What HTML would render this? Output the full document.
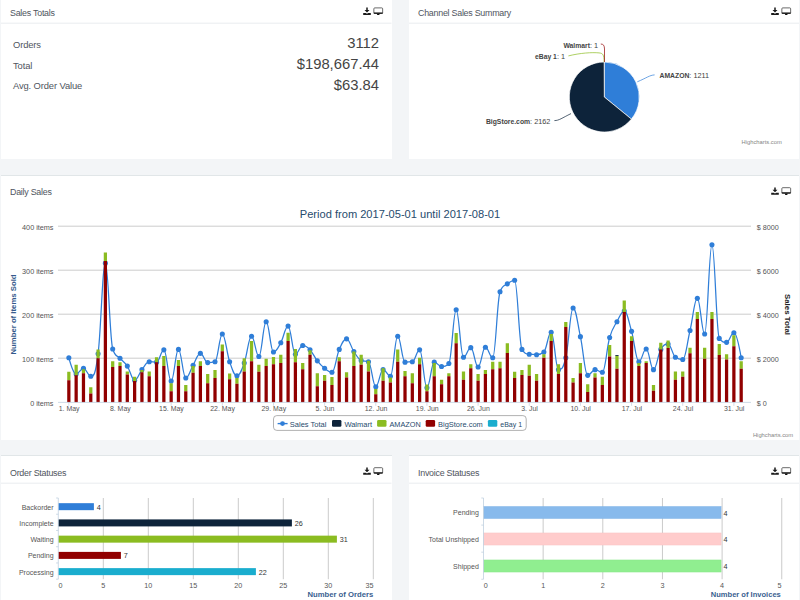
<!DOCTYPE html>
<html><head><meta charset="utf-8"><title>Dashboard</title>
<style>
html,body{margin:0;padding:0}
body{width:800px;height:600px;overflow:hidden;background:#f3f5f7;font-family:"Liberation Sans",sans-serif;position:relative;color:#555}
.panel{position:absolute;background:#fff;border-top:1.5px solid #e1e6e8;box-sizing:border-box}
.hd{position:absolute;left:0;right:0;top:0;font-size:8.9px;letter-spacing:-0.25px;line-height:11px;color:#4f5560;white-space:nowrap}
.hd span{position:absolute;left:9px}
.row{position:absolute;left:12px;right:12.5px;height:20px;font-size:9.4px;letter-spacing:-0.12px;color:#4f5560}
.row b{position:absolute;right:0;bottom:0;font-weight:normal;letter-spacing:0;font-size:14.8px;line-height:15px;color:#444}
.row i{position:absolute;left:0;bottom:0;font-style:normal;line-height:11px}
svg.c{position:absolute;left:0;top:0;pointer-events:none}
</style></head><body>
<div class="panel" style="left:1px;top:-1px;width:390.5px;height:160px"><div class="hd"><span style="top:8.1px">Sales Totals</span></div>
<div class="row" style="top:31.3px"><i style="bottom:1.2px">Orders</i><b>3112</b></div>
<div class="row" style="top:51.8px"><i style="bottom:1.1px">Total</i><b>$198,667.44</b></div>
<div class="row" style="top:72.6px"><i style="bottom:1.5px">Avg. Order Value</i><b>$63.84</b></div>
</div>
<div class="panel" style="left:409px;top:-1px;width:390px;height:160px"><div class="hd"><span style="top:8.1px">Channel Sales Summary</span></div></div>
<div class="panel" style="left:1px;top:175px;width:798px;height:265px"><div class="hd"><span style="top:11.2px">Daily Sales</span></div></div>
<div class="panel" style="left:1px;top:455px;width:390.5px;height:160px"><div class="hd"><span style="top:11.5px">Order Statuses</span></div></div>
<div class="panel" style="left:409px;top:455px;width:390px;height:160px"><div class="hd"><span style="top:11.5px">Invoice Statuses</span></div></div>
<svg class="c" width="800" height="600" viewBox="0 0 800 600">
<path d="M1 23.2H391.5M409 23.2H799M1 483.2H391.5M409 483.2H799" stroke="#e9ecef" stroke-width="1"/>
<g transform="translate(0 0.20)"><g transform="translate(363.20 7.4)" fill="#1a1a1a"><path d="M3.05 0h1.5v2.45h1.75L3.8 4.9 1.3 2.45h1.75z"/><path d="M0 5.3h2.5l1.3 0.8 1.3-0.8h2.5v2H0z"/></g><g transform="translate(373.45 7.3)"><rect x="0.4" y="0.4" width="8.8" height="5.5" rx="0.9" fill="none" stroke="#3a3a3a" stroke-width="0.75"/><rect x="0.3" y="5.0" width="9" height="1.25" fill="#111"/><path d="M3.3 6.2h3l-0.5 1.4h-2z" fill="#111"/></g></g><g transform="translate(0 0.20)"><g transform="translate(771.20 7.4)" fill="#1a1a1a"><path d="M3.05 0h1.5v2.45h1.75L3.8 4.9 1.3 2.45h1.75z"/><path d="M0 5.3h2.5l1.3 0.8 1.3-0.8h2.5v2H0z"/></g><g transform="translate(781.45 7.3)"><rect x="0.4" y="0.4" width="8.8" height="5.5" rx="0.9" fill="none" stroke="#3a3a3a" stroke-width="0.75"/><rect x="0.3" y="5.0" width="9" height="1.25" fill="#111"/><path d="M3.3 6.2h3l-0.5 1.4h-2z" fill="#111"/></g></g><g transform="translate(0 180.00)"><g transform="translate(771.20 7.4)" fill="#1a1a1a"><path d="M3.05 0h1.5v2.45h1.75L3.8 4.9 1.3 2.45h1.75z"/><path d="M0 5.3h2.5l1.3 0.8 1.3-0.8h2.5v2H0z"/></g><g transform="translate(781.45 7.3)"><rect x="0.4" y="0.4" width="8.8" height="5.5" rx="0.9" fill="none" stroke="#3a3a3a" stroke-width="0.75"/><rect x="0.3" y="5.0" width="9" height="1.25" fill="#111"/><path d="M3.3 6.2h3l-0.5 1.4h-2z" fill="#111"/></g></g><g transform="translate(0 460.00)"><g transform="translate(363.20 7.4)" fill="#1a1a1a"><path d="M3.05 0h1.5v2.45h1.75L3.8 4.9 1.3 2.45h1.75z"/><path d="M0 5.3h2.5l1.3 0.8 1.3-0.8h2.5v2H0z"/></g><g transform="translate(373.45 7.3)"><rect x="0.4" y="0.4" width="8.8" height="5.5" rx="0.9" fill="none" stroke="#3a3a3a" stroke-width="0.75"/><rect x="0.3" y="5.0" width="9" height="1.25" fill="#111"/><path d="M3.3 6.2h3l-0.5 1.4h-2z" fill="#111"/></g></g><g transform="translate(0 460.00)"><g transform="translate(771.20 7.4)" fill="#1a1a1a"><path d="M3.05 0h1.5v2.45h1.75L3.8 4.9 1.3 2.45h1.75z"/><path d="M0 5.3h2.5l1.3 0.8 1.3-0.8h2.5v2H0z"/></g><g transform="translate(781.45 7.3)"><rect x="0.4" y="0.4" width="8.8" height="5.5" rx="0.9" fill="none" stroke="#3a3a3a" stroke-width="0.75"/><rect x="0.3" y="5.0" width="9" height="1.25" fill="#111"/><path d="M3.3 6.2h3l-0.5 1.4h-2z" fill="#111"/></g></g>
<path d="M604.30 97.00L604.30 62.00A35 35 0 0 1 631.43 119.11z" fill="#2f7ed8" stroke="#fff" stroke-width="0.7" stroke-linejoin="round"/>
<path d="M604.30 97.00L631.43 119.11A35 35 0 1 1 604.17 62.00z" fill="#0d233a" stroke="#fff" stroke-width="0.7" stroke-linejoin="round"/>
<path d="M654.6 74.9C649.5 75.2 646.5 78 637.3 81.8" fill="none" stroke="#2f7ed8" stroke-width="0.7"/>
<path d="M554.4 120.6C559 120.6 562 118 571 113.6" fill="none" stroke="#0d233a" stroke-width="0.7"/>
<path d="M568.4 55.9C580 53 592 52.2 599 52.9C603 53.3 604 54.5 604.1 62" fill="none" stroke="#8bbc21" stroke-width="0.7"/>
<path d="M600.8 44C603.6 44.2 604.4 45.5 604.5 49V62" fill="none" stroke="#910000" stroke-width="0.7"/>
<text x="598.10" y="47.80" text-anchor="end" font-size="7.3" fill="#444" font-family="Liberation Sans, sans-serif"><tspan font-weight="bold" font-size="6.8">Walmart</tspan>: 1</text>
<text x="565.00" y="59.20" text-anchor="end" font-size="7.3" fill="#444" font-family="Liberation Sans, sans-serif"><tspan font-weight="bold" font-size="6.8">eBay 1</tspan>: 1</text>
<text x="659.50" y="78.20" text-anchor="start" font-size="7.3" fill="#444" font-family="Liberation Sans, sans-serif"><tspan font-weight="bold" font-size="6.8">AMAZON</tspan>: 1211</text>
<text x="550.40" y="123.60" text-anchor="end" font-size="7.3" fill="#444" font-family="Liberation Sans, sans-serif"><tspan font-weight="bold" font-size="6.8">BigStore.com</tspan>: 2162</text>
<text x="781.8" y="144.3" text-anchor="end" font-size="5.8" fill="#858585" font-family="Liberation Sans, sans-serif">Highcharts.com</text>
<path d="M58 358.20H751" stroke="#c0c0c0" stroke-width="0.8"/>
<path d="M58 314.20H751" stroke="#c0c0c0" stroke-width="0.8"/>
<path d="M58 270.20H751" stroke="#c0c0c0" stroke-width="0.8"/>
<path d="M58 226.20H751" stroke="#c0c0c0" stroke-width="0.8"/>
<path d="M68.85 357.76C68.85 357.76 73.23 374.04 76.16 374.04C79.08 374.04 80.54 368.32 83.47 368.32C86.39 368.32 87.85 376.24 90.77 376.24C93.70 376.24 95.16 376.24 98.08 353.80C101.01 331.36 102.47 263.16 105.39 263.16C108.31 263.16 109.77 339.72 112.70 348.96C115.62 358.20 117.08 354.77 120.01 358.20C122.93 361.63 124.39 361.72 127.31 366.12C130.24 370.52 131.70 380.20 134.62 380.20C137.55 380.20 139.01 373.34 141.93 369.64C144.85 365.94 146.31 361.72 149.24 361.72C152.16 361.72 153.62 362.16 156.55 362.16C159.47 362.16 160.93 349.84 163.85 349.84C166.78 349.84 168.24 381.08 171.16 381.08C174.09 381.08 175.55 349.40 178.47 349.40C181.39 349.40 182.85 378.00 185.78 378.00C188.70 378.00 190.16 370.17 193.09 365.24C196.01 360.31 197.47 353.36 200.39 353.36C203.32 353.36 204.78 362.60 207.70 362.60C210.63 362.60 212.09 362.60 215.01 361.72C217.93 360.84 219.39 334.00 222.32 334.00C225.24 334.00 226.70 353.36 229.63 361.72C232.55 370.08 234.01 375.80 236.93 375.80C239.86 375.80 241.32 370.96 244.24 363.04C247.17 355.12 248.63 336.20 251.55 336.20C254.47 336.20 255.93 356.44 258.86 356.44C261.78 356.44 263.24 321.68 266.17 321.68C269.09 321.68 270.55 352.04 273.47 352.04C276.40 352.04 277.86 347.99 280.78 342.80C283.71 337.61 285.17 326.08 288.09 326.08C291.01 326.08 292.47 354.24 295.40 354.24C298.32 354.24 299.78 345.44 302.71 345.44C305.63 345.44 307.09 346.76 310.01 349.84C312.94 352.92 314.40 357.14 317.32 360.84C320.25 364.54 321.71 366.03 324.63 368.32C327.55 370.61 329.01 372.28 331.94 372.28C334.86 372.28 336.32 356.09 339.25 349.40C342.17 342.71 343.63 338.84 346.55 338.84C349.48 338.84 350.94 347.29 353.86 351.60C356.79 355.91 358.25 359.08 361.17 360.40C364.09 361.72 365.55 360.40 368.48 361.72C371.40 363.04 372.86 386.80 375.79 386.80C378.71 386.80 380.17 369.64 383.09 369.64C386.02 369.64 387.48 376.24 390.40 376.24C393.33 376.24 394.79 336.20 397.71 336.20C400.63 336.20 402.09 362.16 405.02 362.16C407.94 362.16 409.40 362.16 412.33 361.72C415.25 361.28 416.71 349.84 419.63 349.84C422.56 349.84 424.02 387.68 426.94 387.68C429.87 387.68 431.33 362.16 434.25 362.16C437.17 362.16 438.63 366.56 441.56 366.56C444.48 366.56 445.94 366.56 448.87 363.48C451.79 360.40 453.25 309.80 456.17 309.80C459.10 309.80 460.56 357.32 463.48 357.32C466.41 357.32 467.87 347.64 470.79 347.64C473.71 347.64 475.17 367.00 478.10 367.00C481.02 367.00 482.48 347.20 485.41 347.20C488.33 347.20 489.79 357.76 492.71 357.76C495.64 357.76 497.10 299.68 500.02 291.76C502.95 283.84 504.41 286.13 507.33 283.84C510.25 281.55 511.71 280.32 514.64 280.32C517.56 280.32 519.02 344.56 521.95 349.40C524.87 354.24 526.33 353.80 529.25 354.24C532.18 354.68 533.64 354.68 536.56 354.68C539.49 354.68 540.95 354.68 543.87 352.04C546.79 349.40 548.25 332.24 551.18 332.24C554.10 332.24 555.56 369.64 558.49 369.64C561.41 369.64 562.87 369.64 565.79 357.76C568.72 345.88 570.18 308.04 573.10 308.04C576.03 308.04 577.49 323.18 580.41 336.64C583.33 350.10 584.79 375.36 587.72 375.36C590.64 375.36 592.10 369.64 595.03 369.64C597.95 369.64 599.41 372.28 602.33 372.28C605.26 372.28 606.72 347.64 609.64 337.52C612.57 327.40 614.03 326.96 616.95 321.68C619.87 316.40 621.33 311.12 624.26 311.12C627.18 311.12 628.64 321.24 631.57 331.36C634.49 341.48 635.95 361.72 638.87 361.72C641.80 361.72 643.26 348.96 646.18 348.96C649.11 348.96 650.57 369.64 653.49 369.64C656.41 369.64 657.87 354.50 660.80 349.40C663.72 344.30 665.18 344.12 668.11 344.12C671.03 344.12 672.49 355.12 675.41 357.32C678.34 359.52 679.80 359.52 682.72 359.52C685.65 359.52 687.11 342.71 690.03 330.48C692.95 318.25 694.41 298.36 697.34 298.36C700.26 298.36 701.72 334.00 704.65 334.00C707.57 334.00 709.03 244.68 711.95 244.68C714.88 244.68 716.34 334.44 719.26 338.40C722.19 342.36 723.65 342.36 726.57 342.36C729.49 342.36 730.95 332.68 733.88 332.68C736.80 332.68 741.19 357.76 741.19 357.76" fill="none" stroke="#2f7ed8" stroke-width="1.25" stroke-linejoin="round" stroke-linecap="round"/>
<g fill="#2f7ed8"><circle cx="68.85" cy="357.76" r="2.55"/><circle cx="76.16" cy="374.04" r="2.55"/><circle cx="83.47" cy="368.32" r="2.55"/><circle cx="90.77" cy="376.24" r="2.55"/><circle cx="98.08" cy="353.80" r="2.55"/><circle cx="105.39" cy="263.16" r="2.55"/><circle cx="112.70" cy="348.96" r="2.55"/><circle cx="120.01" cy="358.20" r="2.55"/><circle cx="127.31" cy="366.12" r="2.55"/><circle cx="134.62" cy="380.20" r="2.55"/><circle cx="141.93" cy="369.64" r="2.55"/><circle cx="149.24" cy="361.72" r="2.55"/><circle cx="156.55" cy="362.16" r="2.55"/><circle cx="163.85" cy="349.84" r="2.55"/><circle cx="171.16" cy="381.08" r="2.55"/><circle cx="178.47" cy="349.40" r="2.55"/><circle cx="185.78" cy="378.00" r="2.55"/><circle cx="193.09" cy="365.24" r="2.55"/><circle cx="200.39" cy="353.36" r="2.55"/><circle cx="207.70" cy="362.60" r="2.55"/><circle cx="215.01" cy="361.72" r="2.55"/><circle cx="222.32" cy="334.00" r="2.55"/><circle cx="229.63" cy="361.72" r="2.55"/><circle cx="236.93" cy="375.80" r="2.55"/><circle cx="244.24" cy="363.04" r="2.55"/><circle cx="251.55" cy="336.20" r="2.55"/><circle cx="258.86" cy="356.44" r="2.55"/><circle cx="266.17" cy="321.68" r="2.55"/><circle cx="273.47" cy="352.04" r="2.55"/><circle cx="280.78" cy="342.80" r="2.55"/><circle cx="288.09" cy="326.08" r="2.55"/><circle cx="295.40" cy="354.24" r="2.55"/><circle cx="302.71" cy="345.44" r="2.55"/><circle cx="310.01" cy="349.84" r="2.55"/><circle cx="317.32" cy="360.84" r="2.55"/><circle cx="324.63" cy="368.32" r="2.55"/><circle cx="331.94" cy="372.28" r="2.55"/><circle cx="339.25" cy="349.40" r="2.55"/><circle cx="346.55" cy="338.84" r="2.55"/><circle cx="353.86" cy="351.60" r="2.55"/><circle cx="361.17" cy="360.40" r="2.55"/><circle cx="368.48" cy="361.72" r="2.55"/><circle cx="375.79" cy="386.80" r="2.55"/><circle cx="383.09" cy="369.64" r="2.55"/><circle cx="390.40" cy="376.24" r="2.55"/><circle cx="397.71" cy="336.20" r="2.55"/><circle cx="405.02" cy="362.16" r="2.55"/><circle cx="412.33" cy="361.72" r="2.55"/><circle cx="419.63" cy="349.84" r="2.55"/><circle cx="426.94" cy="387.68" r="2.55"/><circle cx="434.25" cy="362.16" r="2.55"/><circle cx="441.56" cy="366.56" r="2.55"/><circle cx="448.87" cy="363.48" r="2.55"/><circle cx="456.17" cy="309.80" r="2.55"/><circle cx="463.48" cy="357.32" r="2.55"/><circle cx="470.79" cy="347.64" r="2.55"/><circle cx="478.10" cy="367.00" r="2.55"/><circle cx="485.41" cy="347.20" r="2.55"/><circle cx="492.71" cy="357.76" r="2.55"/><circle cx="500.02" cy="291.76" r="2.55"/><circle cx="507.33" cy="283.84" r="2.55"/><circle cx="514.64" cy="280.32" r="2.55"/><circle cx="521.95" cy="349.40" r="2.55"/><circle cx="529.25" cy="354.24" r="2.55"/><circle cx="536.56" cy="354.68" r="2.55"/><circle cx="543.87" cy="352.04" r="2.55"/><circle cx="551.18" cy="332.24" r="2.55"/><circle cx="558.49" cy="369.64" r="2.55"/><circle cx="565.79" cy="357.76" r="2.55"/><circle cx="573.10" cy="308.04" r="2.55"/><circle cx="580.41" cy="336.64" r="2.55"/><circle cx="587.72" cy="375.36" r="2.55"/><circle cx="595.03" cy="369.64" r="2.55"/><circle cx="602.33" cy="372.28" r="2.55"/><circle cx="609.64" cy="337.52" r="2.55"/><circle cx="616.95" cy="321.68" r="2.55"/><circle cx="624.26" cy="311.12" r="2.55"/><circle cx="631.57" cy="331.36" r="2.55"/><circle cx="638.87" cy="361.72" r="2.55"/><circle cx="646.18" cy="348.96" r="2.55"/><circle cx="653.49" cy="369.64" r="2.55"/><circle cx="660.80" cy="349.40" r="2.55"/><circle cx="668.11" cy="344.12" r="2.55"/><circle cx="675.41" cy="357.32" r="2.55"/><circle cx="682.72" cy="359.52" r="2.55"/><circle cx="690.03" cy="330.48" r="2.55"/><circle cx="697.34" cy="298.36" r="2.55"/><circle cx="704.65" cy="334.00" r="2.55"/><circle cx="711.95" cy="244.68" r="2.55"/><circle cx="719.26" cy="338.40" r="2.55"/><circle cx="726.57" cy="342.36" r="2.55"/><circle cx="733.88" cy="332.68" r="2.55"/><circle cx="741.19" cy="357.76" r="2.55"/></g>
<path d="M67.22 371.84h3.25V380.20h-3.25zM74.53 364.80h3.25V375.36h-3.25zM81.84 369.20h3.25V373.16h-3.25zM89.15 387.24h3.25V393.40h-3.25zM96.46 349.40h3.25V358.20h-3.25zM103.76 252.60h3.25V260.96h-3.25zM111.07 361.28h3.25V367.00h-3.25zM118.38 362.16h3.25V366.12h-3.25zM125.69 371.40h3.25V374.48h-3.25zM133.00 376.68h3.25V381.08h-3.25zM140.31 370.08h3.25V372.28h-3.25zM147.61 371.40h3.25V376.24h-3.25zM154.92 357.32h3.25V362.16h-3.25zM162.23 356.00h3.25V366.12h-3.25zM169.54 383.28h3.25V391.20h-3.25zM176.84 359.96h3.25V366.12h-3.25zM184.15 385.04h3.25V391.20h-3.25zM191.46 366.12h3.25V372.72h-3.25zM198.77 361.28h3.25V366.12h-3.25zM206.08 374.04h3.25V383.28h-3.25zM213.38 370.08h3.25V378.00h-3.25zM220.69 344.56h3.25V351.16h-3.25zM228.00 373.60h3.25V379.32h-3.25zM235.31 378.00h3.25V383.72h-3.25zM242.62 358.20h3.25V371.40h-3.25zM249.92 341.04h3.25V361.28h-3.25zM257.23 364.80h3.25V371.84h-3.25zM264.54 358.64h3.25V366.12h-3.25zM271.85 356.88h3.25V364.36h-3.25zM279.16 354.68h3.25V363.04h-3.25zM286.47 332.68h3.25V341.04h-3.25zM293.77 348.96h3.25V362.16h-3.25zM301.08 363.04h3.25V369.20h-3.25zM308.39 350.28h3.25V354.68h-3.25zM315.70 373.16h3.25V386.36h-3.25zM323.00 374.92h3.25V380.64h-3.25zM330.31 377.12h3.25V385.04h-3.25zM337.62 357.32h3.25V361.28h-3.25zM344.93 372.28h3.25V377.56h-3.25zM352.24 351.60h3.25V366.12h-3.25zM359.54 354.68h3.25V364.80h-3.25zM366.85 360.84h3.25V371.40h-3.25zM374.16 389.00h3.25V394.28h-3.25zM381.47 368.32h3.25V380.64h-3.25zM388.78 377.56h3.25V382.40h-3.25zM396.09 349.40h3.25V361.72h-3.25zM403.39 370.96h3.25V376.24h-3.25zM410.70 373.16h3.25V383.28h-3.25zM418.01 357.76h3.25V364.36h-3.25zM425.32 384.60h3.25V391.20h-3.25zM432.62 363.04h3.25V376.24h-3.25zM439.93 379.76h3.25V384.16h-3.25zM447.24 373.16h3.25V376.24h-3.25zM454.55 333.12h3.25V343.24h-3.25zM461.86 371.40h3.25V379.76h-3.25zM469.16 364.36h3.25V368.32h-3.25zM476.47 374.04h3.25V380.64h-3.25zM483.78 370.08h3.25V374.04h-3.25zM491.09 361.72h3.25V369.20h-3.25zM498.40 361.72h3.25V368.32h-3.25zM505.71 343.24h3.25V352.92h-3.25zM513.01 371.84h3.25V378.00h-3.25zM520.32 370.08h3.25V374.92h-3.25zM527.63 364.80h3.25V375.80h-3.25zM534.94 374.04h3.25V380.64h-3.25zM542.25 354.24h3.25V357.76h-3.25zM549.55 334.00h3.25V341.04h-3.25zM556.86 364.36h3.25V374.04h-3.25zM564.17 322.12h3.25V326.96h-3.25zM571.48 378.00h3.25V382.40h-3.25zM578.78 363.04h3.25V373.16h-3.25zM586.09 384.16h3.25V392.08h-3.25zM593.40 373.16h3.25V377.56h-3.25zM600.71 376.68h3.25V385.04h-3.25zM608.02 345.00h3.25V356.44h-3.25zM615.33 356.00h3.25V368.76h-3.25zM622.63 300.56h3.25V312.00h-3.25zM629.94 336.20h3.25V341.04h-3.25zM637.25 363.04h3.25V366.12h-3.25zM644.56 361.28h3.25V363.04h-3.25zM651.87 385.04h3.25V390.76h-3.25zM659.17 342.80h3.25V349.40h-3.25zM666.48 340.60h3.25V348.08h-3.25zM673.79 371.40h3.25V379.76h-3.25zM681.10 371.40h3.25V376.68h-3.25zM688.40 347.64h3.25V353.36h-3.25zM695.71 312.00h3.25V319.04h-3.25zM703.02 347.64h3.25V358.64h-3.25zM710.33 312.00h3.25V319.04h-3.25zM717.64 344.12h3.25V355.12h-3.25zM724.95 354.24h3.25V359.52h-3.25zM732.25 335.32h3.25V346.32h-3.25zM739.56 361.28h3.25V368.76h-3.25z" fill="#8bbc21"/>
<path d="M67.22 380.20h3.25V402.20h-3.25zM74.53 375.36h3.25V402.20h-3.25zM81.84 373.16h3.25V402.20h-3.25zM89.15 393.40h3.25V402.20h-3.25zM96.46 358.20h3.25V402.20h-3.25zM103.76 260.96h3.25V402.20h-3.25zM111.07 367.00h3.25V402.20h-3.25zM118.38 366.12h3.25V402.20h-3.25zM125.69 374.48h3.25V402.20h-3.25zM133.00 381.08h3.25V402.20h-3.25zM140.31 372.28h3.25V402.20h-3.25zM147.61 376.24h3.25V402.20h-3.25zM154.92 362.16h3.25V402.20h-3.25zM162.23 366.12h3.25V402.20h-3.25zM169.54 391.20h3.25V402.20h-3.25zM176.84 366.12h3.25V402.20h-3.25zM184.15 391.20h3.25V402.20h-3.25zM191.46 372.72h3.25V402.20h-3.25zM198.77 366.12h3.25V402.20h-3.25zM206.08 383.28h3.25V402.20h-3.25zM213.38 378.00h3.25V402.20h-3.25zM220.69 351.16h3.25V402.20h-3.25zM228.00 379.32h3.25V402.20h-3.25zM235.31 383.72h3.25V402.20h-3.25zM242.62 371.40h3.25V402.20h-3.25zM249.92 361.28h3.25V402.20h-3.25zM257.23 371.84h3.25V402.20h-3.25zM264.54 366.12h3.25V402.20h-3.25zM271.85 364.36h3.25V402.20h-3.25zM279.16 363.04h3.25V402.20h-3.25zM286.47 341.04h3.25V402.20h-3.25zM293.77 362.16h3.25V402.20h-3.25zM301.08 369.20h3.25V402.20h-3.25zM308.39 354.68h3.25V402.20h-3.25zM315.70 386.36h3.25V402.20h-3.25zM323.00 380.64h3.25V402.20h-3.25zM330.31 385.04h3.25V402.20h-3.25zM337.62 361.28h3.25V402.20h-3.25zM344.93 377.56h3.25V402.20h-3.25zM352.24 366.12h3.25V402.20h-3.25zM359.54 364.80h3.25V402.20h-3.25zM366.85 371.40h3.25V402.20h-3.25zM374.16 394.28h3.25V402.20h-3.25zM381.47 380.64h3.25V402.20h-3.25zM388.78 382.40h3.25V402.20h-3.25zM396.09 361.72h3.25V402.20h-3.25zM403.39 376.24h3.25V402.20h-3.25zM410.70 383.28h3.25V402.20h-3.25zM418.01 364.36h3.25V402.20h-3.25zM425.32 391.20h3.25V402.20h-3.25zM432.62 376.24h3.25V402.20h-3.25zM439.93 384.16h3.25V402.20h-3.25zM447.24 376.24h3.25V402.20h-3.25zM454.55 343.24h3.25V402.20h-3.25zM461.86 379.76h3.25V402.20h-3.25zM469.16 368.32h3.25V402.20h-3.25zM476.47 380.64h3.25V402.20h-3.25zM483.78 374.04h3.25V402.20h-3.25zM491.09 369.20h3.25V402.20h-3.25zM498.40 368.32h3.25V402.20h-3.25zM505.71 352.92h3.25V402.20h-3.25zM513.01 378.00h3.25V402.20h-3.25zM520.32 374.92h3.25V402.20h-3.25zM527.63 375.80h3.25V402.20h-3.25zM534.94 380.64h3.25V402.20h-3.25zM542.25 357.76h3.25V402.20h-3.25zM549.55 341.04h3.25V402.20h-3.25zM556.86 374.04h3.25V402.20h-3.25zM564.17 326.96h3.25V402.20h-3.25zM571.48 382.40h3.25V402.20h-3.25zM578.78 373.16h3.25V402.20h-3.25zM586.09 392.08h3.25V402.20h-3.25zM593.40 377.56h3.25V402.20h-3.25zM600.71 385.04h3.25V402.20h-3.25zM608.02 356.44h3.25V402.20h-3.25zM615.33 368.76h3.25V402.20h-3.25zM622.63 312.00h3.25V402.20h-3.25zM629.94 341.04h3.25V402.20h-3.25zM637.25 366.12h3.25V402.20h-3.25zM644.56 363.04h3.25V402.20h-3.25zM651.87 390.76h3.25V402.20h-3.25zM659.17 349.40h3.25V402.20h-3.25zM666.48 348.08h3.25V402.20h-3.25zM673.79 379.76h3.25V402.20h-3.25zM681.10 376.68h3.25V402.20h-3.25zM688.40 353.36h3.25V402.20h-3.25zM695.71 319.04h3.25V402.20h-3.25zM703.02 358.64h3.25V402.20h-3.25zM710.33 319.04h3.25V402.20h-3.25zM717.64 355.12h3.25V402.20h-3.25zM724.95 359.52h3.25V402.20h-3.25zM732.25 346.32h3.25V402.20h-3.25zM739.56 368.76h3.25V402.20h-3.25z" fill="#910000"/>
<rect x="615.33" y="355.10" width="3.25" height="0.9" fill="#0d233a"/>
<path d="M58 402.40H751" stroke="#c0d0e0" stroke-width="0.8"/>
<text x="53.5" y="405.90" text-anchor="end" font-size="7.25" fill="#555" font-family="Liberation Sans, sans-serif">0 items</text>
<text x="756.8" y="405.90" font-size="7.2" fill="#555" font-family="Liberation Sans, sans-serif">$ 0</text>
<text x="53.5" y="361.90" text-anchor="end" font-size="7.25" fill="#555" font-family="Liberation Sans, sans-serif">100 items</text>
<text x="756.8" y="361.90" font-size="7.2" fill="#555" font-family="Liberation Sans, sans-serif">$ 2000</text>
<text x="53.5" y="317.90" text-anchor="end" font-size="7.25" fill="#555" font-family="Liberation Sans, sans-serif">200 items</text>
<text x="756.8" y="317.90" font-size="7.2" fill="#555" font-family="Liberation Sans, sans-serif">$ 4000</text>
<text x="53.5" y="273.90" text-anchor="end" font-size="7.25" fill="#555" font-family="Liberation Sans, sans-serif">300 items</text>
<text x="756.8" y="273.90" font-size="7.2" fill="#555" font-family="Liberation Sans, sans-serif">$ 6000</text>
<text x="53.5" y="229.90" text-anchor="end" font-size="7.25" fill="#555" font-family="Liberation Sans, sans-serif">400 items</text>
<text x="756.8" y="229.90" font-size="7.2" fill="#555" font-family="Liberation Sans, sans-serif">$ 8000</text>
<path d="M68.85 402.60v3.2M120.01 402.60v3.2M171.16 402.60v3.2M222.32 402.60v3.2M273.47 402.60v3.2M324.63 402.60v3.2M375.79 402.60v3.2M426.94 402.60v3.2M478.10 402.60v3.2M529.25 402.60v3.2M580.41 402.60v3.2M631.57 402.60v3.2M682.72 402.60v3.2M733.88 402.60v3.2" stroke="#c0d0e0" stroke-width="0.7" fill="none"/>
<text x="69.15" y="410.9" text-anchor="middle" font-size="6.95" fill="#555" font-family="Liberation Sans, sans-serif">1. May</text>
<text x="120.31" y="410.9" text-anchor="middle" font-size="6.95" fill="#555" font-family="Liberation Sans, sans-serif">8. May</text>
<text x="171.46" y="410.9" text-anchor="middle" font-size="6.95" fill="#555" font-family="Liberation Sans, sans-serif">15. May</text>
<text x="222.62" y="410.9" text-anchor="middle" font-size="6.95" fill="#555" font-family="Liberation Sans, sans-serif">22. May</text>
<text x="273.77" y="410.9" text-anchor="middle" font-size="6.95" fill="#555" font-family="Liberation Sans, sans-serif">29. May</text>
<text x="324.93" y="410.9" text-anchor="middle" font-size="6.95" fill="#555" font-family="Liberation Sans, sans-serif">5. Jun</text>
<text x="376.09" y="410.9" text-anchor="middle" font-size="6.95" fill="#555" font-family="Liberation Sans, sans-serif">12. Jun</text>
<text x="427.24" y="410.9" text-anchor="middle" font-size="6.95" fill="#555" font-family="Liberation Sans, sans-serif">19. Jun</text>
<text x="478.40" y="410.9" text-anchor="middle" font-size="6.95" fill="#555" font-family="Liberation Sans, sans-serif">26. Jun</text>
<text x="529.55" y="410.9" text-anchor="middle" font-size="6.95" fill="#555" font-family="Liberation Sans, sans-serif">3. Jul</text>
<text x="580.71" y="410.9" text-anchor="middle" font-size="6.95" fill="#555" font-family="Liberation Sans, sans-serif">10. Jul</text>
<text x="631.87" y="410.9" text-anchor="middle" font-size="6.95" fill="#555" font-family="Liberation Sans, sans-serif">17. Jul</text>
<text x="683.02" y="410.9" text-anchor="middle" font-size="6.95" fill="#555" font-family="Liberation Sans, sans-serif">24. Jul</text>
<text x="734.18" y="410.9" text-anchor="middle" font-size="6.95" fill="#555" font-family="Liberation Sans, sans-serif">31. Jul</text>
<text x="400" y="217.8" text-anchor="middle" font-size="11.1" fill="#274b6d" font-family="Liberation Sans, sans-serif">Period from 2017-05-01 until 2017-08-01</text>
<text transform="translate(15.8 314.5) rotate(-90)" text-anchor="middle" font-size="7.75" font-weight="bold" fill="#34598b" font-family="Liberation Sans, sans-serif">Number of Items Sold</text>
<text transform="translate(784.5 314.5) rotate(90)" text-anchor="middle" font-size="7.9" font-weight="bold" fill="#222" font-family="Liberation Sans, sans-serif">Sales Total</text>
<rect x="273.5" y="415.6" width="252.7" height="14.8" rx="3.3" fill="#fff" stroke="#909090" stroke-width="0.7"/>
<path d="M277.6 423.6h10" stroke="#2f7ed8" stroke-width="1.35"/><circle cx="282.5" cy="423.6" r="2.4" fill="#2f7ed8"/>
<text x="289.80" y="426.5" font-size="7.5" fill="#274b6d" font-family="Liberation Sans, sans-serif">Sales Total</text>
<rect x="332.00" y="419.9" width="9.4" height="6.9" rx="1.3" fill="#0d233a"/>
<text x="344.40" y="426.5" font-size="7.5" fill="#274b6d" font-family="Liberation Sans, sans-serif">Walmart</text>
<rect x="377.10" y="419.9" width="9.4" height="6.9" rx="1.3" fill="#8bbc21"/>
<text x="389.50" y="426.5" font-size="7.3" fill="#274b6d" font-family="Liberation Sans, sans-serif">AMAZON</text>
<rect x="425.70" y="419.9" width="9.4" height="6.9" rx="1.3" fill="#910000"/>
<text x="438.10" y="426.5" font-size="7.45" fill="#274b6d" font-family="Liberation Sans, sans-serif">BigStore.com</text>
<rect x="487.90" y="419.9" width="9.4" height="6.9" rx="1.3" fill="#1aadce"/>
<text x="500.30" y="426.5" font-size="7.0" fill="#274b6d" font-family="Liberation Sans, sans-serif">eBay 1</text>
<text x="793.2" y="437.2" text-anchor="end" font-size="5.8" fill="#858585" font-family="Liberation Sans, sans-serif">Highcharts.com</text>
<path d="M103.30 498.00V579.20" stroke="#c0c0c0" stroke-width="0.85"/>
<path d="M148.30 498.00V579.20" stroke="#c0c0c0" stroke-width="0.85"/>
<path d="M193.30 498.00V579.20" stroke="#c0c0c0" stroke-width="0.85"/>
<path d="M238.30 498.00V579.20" stroke="#c0c0c0" stroke-width="0.85"/>
<path d="M283.30 498.00V579.20" stroke="#c0c0c0" stroke-width="0.85"/>
<path d="M328.30 498.00V579.20" stroke="#c0c0c0" stroke-width="0.85"/>
<path d="M373.30 498.00V579.20" stroke="#c0c0c0" stroke-width="0.85"/>
<rect x="58.30" y="503.17" width="35.60" height="7" fill="#2f7ed8"/>
<text x="53.6" y="509.77" text-anchor="end" font-size="7.0" fill="#555" font-family="Liberation Sans, sans-serif">Backorder</text>
<text x="96.70" y="509.77" font-size="7.2" fill="#333" font-family="Liberation Sans, sans-serif">4</text>
<rect x="58.30" y="519.41" width="233.60" height="7" fill="#0d233a"/>
<text x="53.6" y="526.01" text-anchor="end" font-size="7.0" fill="#555" font-family="Liberation Sans, sans-serif">Incomplete</text>
<text x="294.70" y="526.01" font-size="7.2" fill="#333" font-family="Liberation Sans, sans-serif">26</text>
<rect x="58.30" y="535.65" width="278.60" height="7" fill="#8bbc21"/>
<text x="53.6" y="542.25" text-anchor="end" font-size="7.0" fill="#555" font-family="Liberation Sans, sans-serif">Waiting</text>
<text x="339.70" y="542.25" font-size="7.2" fill="#333" font-family="Liberation Sans, sans-serif">31</text>
<rect x="58.30" y="551.89" width="62.60" height="7" fill="#910000"/>
<text x="53.6" y="558.49" text-anchor="end" font-size="7.0" fill="#555" font-family="Liberation Sans, sans-serif">Pending</text>
<text x="123.70" y="558.49" font-size="7.2" fill="#333" font-family="Liberation Sans, sans-serif">7</text>
<rect x="58.30" y="568.13" width="197.60" height="7" fill="#1aadce"/>
<text x="53.6" y="574.73" text-anchor="end" font-size="7.0" fill="#555" font-family="Liberation Sans, sans-serif">Processing</text>
<text x="258.70" y="574.73" font-size="7.2" fill="#333" font-family="Liberation Sans, sans-serif">22</text>
<path d="M58.30 498.00V579.20M58.30 498.00h-2.2M58.30 514.24h-2.2M58.30 530.48h-2.2M58.30 546.72h-2.2M58.30 562.96h-2.2M58.30 579.20h-2.2" stroke="#c0d0e0" stroke-width="0.8" fill="none"/>
<text x="60.50" y="588.0" text-anchor="middle" font-size="7.2" fill="#555" font-family="Liberation Sans, sans-serif">0</text>
<text x="103.30" y="588.0" text-anchor="middle" font-size="7.2" fill="#555" font-family="Liberation Sans, sans-serif">5</text>
<text x="148.30" y="588.0" text-anchor="middle" font-size="7.2" fill="#555" font-family="Liberation Sans, sans-serif">10</text>
<text x="193.30" y="588.0" text-anchor="middle" font-size="7.2" fill="#555" font-family="Liberation Sans, sans-serif">15</text>
<text x="238.30" y="588.0" text-anchor="middle" font-size="7.2" fill="#555" font-family="Liberation Sans, sans-serif">20</text>
<text x="283.30" y="588.0" text-anchor="middle" font-size="7.2" fill="#555" font-family="Liberation Sans, sans-serif">25</text>
<text x="328.30" y="588.0" text-anchor="middle" font-size="7.2" fill="#555" font-family="Liberation Sans, sans-serif">30</text>
<text x="373.4" y="588.0" text-anchor="end" font-size="7.2" fill="#555" font-family="Liberation Sans, sans-serif">35</text>
<text x="373.2" y="596.8" text-anchor="end" font-size="7.7" font-weight="bold" fill="#3a5f90" font-family="Liberation Sans, sans-serif">Number of Orders</text>
<path d="M543.15 498.00V579.25" stroke="#c0c0c0" stroke-width="0.85"/>
<path d="M602.80 498.00V579.25" stroke="#c0c0c0" stroke-width="0.85"/>
<path d="M662.45 498.00V579.25" stroke="#c0c0c0" stroke-width="0.85"/>
<path d="M722.10 498.00V579.25" stroke="#c0c0c0" stroke-width="0.85"/>
<path d="M781.75 498.00V579.25" stroke="#c0c0c0" stroke-width="0.85"/>
<rect x="483.70" y="506.45" width="237.40" height="12.1" fill="#88baec" stroke="#7aaee6" stroke-width="0.4"/>
<text x="478.8" y="515.25" text-anchor="end" font-size="7.0" fill="#555" font-family="Liberation Sans, sans-serif">Pending</text>
<text x="723.60" y="515.75" font-size="7.2" fill="#333" font-family="Liberation Sans, sans-serif">4</text>
<rect x="483.70" y="532.95" width="237.40" height="12.1" fill="#ffcccc" stroke="#f6c0c0" stroke-width="0.4"/>
<text x="478.8" y="541.75" text-anchor="end" font-size="7.0" fill="#555" font-family="Liberation Sans, sans-serif">Total Unshipped</text>
<text x="723.60" y="542.25" font-size="7.2" fill="#333" font-family="Liberation Sans, sans-serif">4</text>
<rect x="483.70" y="559.95" width="237.40" height="12.1" fill="#90ee90" stroke="#84e184" stroke-width="0.4"/>
<text x="478.8" y="568.75" text-anchor="end" font-size="7.0" fill="#555" font-family="Liberation Sans, sans-serif">Shipped</text>
<text x="723.60" y="569.25" font-size="7.2" fill="#333" font-family="Liberation Sans, sans-serif">4</text>
<path d="M483.50 498.00V579.25M483.50 498.00h-2.2M483.50 525.08h-2.2M483.50 552.17h-2.2M483.50 579.25h-2.2" stroke="#c0d0e0" stroke-width="0.8" fill="none"/>
<text x="485.80" y="588.0" text-anchor="middle" font-size="7.2" fill="#555" font-family="Liberation Sans, sans-serif">0</text>
<text x="543.15" y="588.0" text-anchor="middle" font-size="7.2" fill="#555" font-family="Liberation Sans, sans-serif">1</text>
<text x="602.80" y="588.0" text-anchor="middle" font-size="7.2" fill="#555" font-family="Liberation Sans, sans-serif">2</text>
<text x="662.45" y="588.0" text-anchor="middle" font-size="7.2" fill="#555" font-family="Liberation Sans, sans-serif">3</text>
<text x="722.10" y="588.0" text-anchor="middle" font-size="7.2" fill="#555" font-family="Liberation Sans, sans-serif">4</text>
<text x="781.6" y="588.0" text-anchor="end" font-size="7.2" fill="#555" font-family="Liberation Sans, sans-serif">5</text>
<text x="780.8" y="596.8" text-anchor="end" font-size="7.55" font-weight="bold" fill="#3a5f90" font-family="Liberation Sans, sans-serif">Number of Invoices</text>
</svg>
</body></html>
